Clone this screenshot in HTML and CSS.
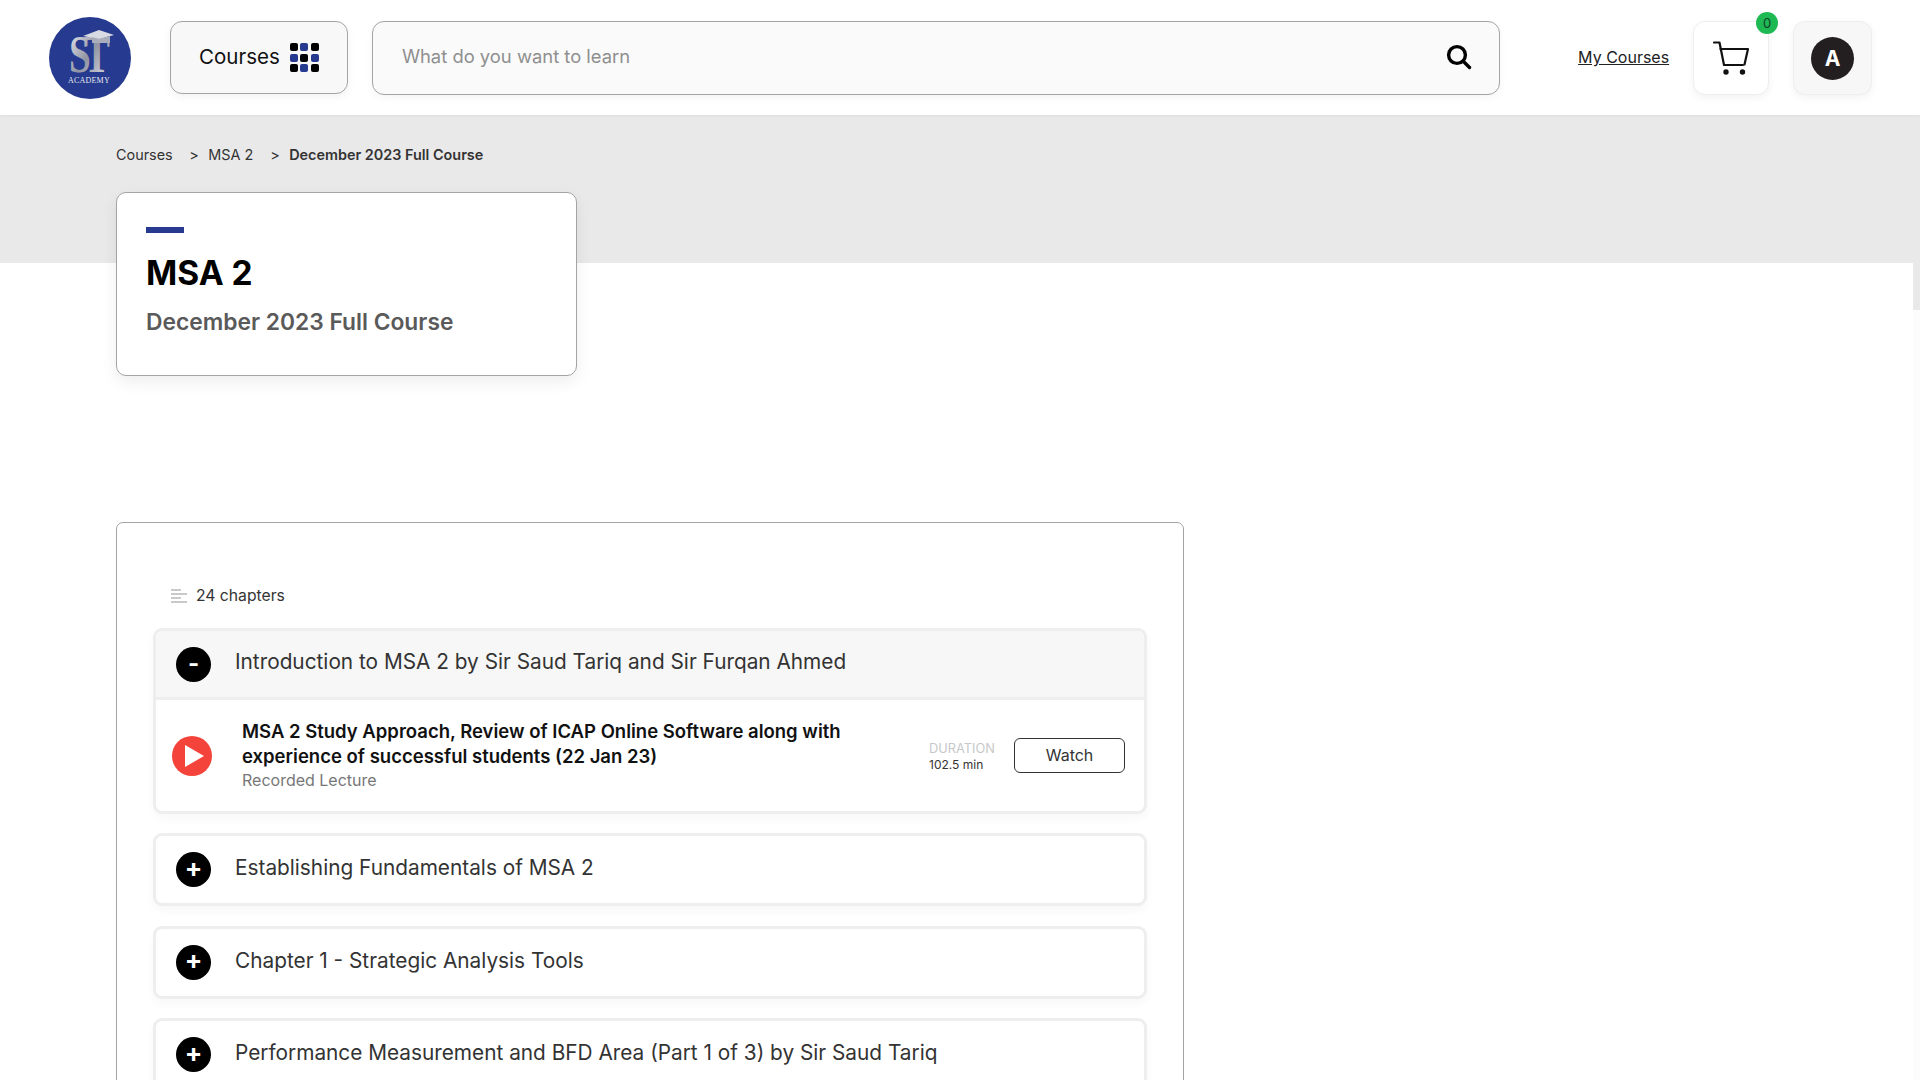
FILE: index.html
```html
<!DOCTYPE html>
<html lang="en">
<head>
<meta charset="utf-8">
<title>December 2023 Full Course</title>
<link rel="stylesheet" href="styles.css">
</head>
<body>
<header class="topbar">
  <svg class="logo" viewBox="0 0 82 82" aria-label="ST Academy">
    <defs>
      <linearGradient id="silver" x1="0" y1="0" x2="1" y2="1">
        <stop offset="0" stop-color="#f4f4f7"/>
        <stop offset="0.5" stop-color="#8f93a2"/>
        <stop offset="1" stop-color="#e8e9ee"/>
      </linearGradient>
    </defs>
    <circle cx="41" cy="41" r="41" fill="#263a8f"/>
    <text transform="translate(37 55) scale(.85 1.15)" class="logo-st" fill="url(#silver)">ST</text>
    <path d="M34 19 L50 13 L65 18 L50 22 Z" fill="#d9dbe3"/>
    <path d="M43 20 V26 H61 V19 L50 22 Z" fill="#a9adbb"/>
    <text x="40" y="66" class="logo-academy">ACADEMY</text>
  </svg>
  <button class="courses-btn">
    <span class="courses-label">Courses</span>
    <span class="dots">
      <i class="k"></i><i class="b"></i><i class="k"></i>
      <i class="b"></i><i class="k"></i><i class="b"></i>
      <i class="k"></i><i class="b"></i><i class="k"></i>
    </span>
  </button>
  <div class="search">
    <span class="placeholder">What do you want to learn</span>
    <svg class="search-icon" viewBox="0 0 26 26" fill="none" stroke="#000" stroke-width="3.4" stroke-linecap="round">
      <circle cx="11" cy="11" r="8.4"/>
      <path d="M17.5 17.5 L23.5 23.5"/>
    </svg>
  </div>
  <a class="my-courses" href="#">My Courses</a>
  <div class="cart">
    <svg class="cart-icon" viewBox="0 0 36 34" fill="none" stroke="#111" stroke-width="2.2" stroke-linejoin="round" stroke-linecap="round">
      <path d="M1 1.5 H6.5 L11 24 H30"/>
      <path d="M7.5 8 H35 L31.5 23.5"/>
      <circle cx="13" cy="31" r="1.6" fill="#111"/>
      <circle cx="29.5" cy="31" r="1.6" fill="#111"/>
    </svg>
    <span class="badge">0</span>
  </div>
  <div class="avatar-box"><span class="avatar">A</span></div>
</header>

<section class="hero">
  <nav class="crumbs">
    <span>Courses</span><span class="sep">&gt;</span><span>MSA 2</span><span class="sep sep2">&gt;</span><span class="current">December 2023 Full Course</span>
  </nav>
  <div class="title-card">
    <div class="accent"></div>
    <h1>MSA 2</h1>
    <h2>December 2023 Full Course</h2>
  </div>
</section>

<main class="content">
  <section class="panel">
    <div class="count">
      <svg class="count-icon" viewBox="0 0 16 14" fill="#c9c9c9">
        <rect x="0" y="0" width="10" height="2"/>
        <rect x="0" y="4" width="16" height="2"/>
        <rect x="0" y="8" width="10" height="2"/>
        <rect x="0" y="12" width="16" height="2"/>
      </svg>
      <span>24 chapters</span>
    </div>

    <article class="chapter open">
      <div class="chapter-head">
        <span class="toggle">-</span>
        <span class="chapter-title">Introduction to MSA 2 by Sir Saud Tariq and Sir Furqan Ahmed</span>
      </div>
      <div class="lecture">
        <svg class="play" viewBox="0 0 40 40">
          <circle cx="20" cy="20" r="20" fill="#f4433a"/>
          <path d="M13 9 L32 20 L13 31 Z" fill="#fff"/>
        </svg>
        <div class="lecture-info">
          <div class="lecture-title">MSA 2 Study Approach, Review of ICAP Online Software along with experience of successful students (22 Jan 23)</div>
          <div class="lecture-type">Recorded Lecture</div>
        </div>
        <div class="duration">
          <div class="duration-label">DURATION</div>
          <div class="duration-value">102.5 min</div>
        </div>
        <button class="watch">Watch</button>
      </div>
    </article>

    <article class="chapter">
      <div class="chapter-head"><span class="toggle plus">+</span><span class="chapter-title">Establishing Fundamentals of MSA 2</span></div>
    </article>
    <article class="chapter">
      <div class="chapter-head"><span class="toggle plus">+</span><span class="chapter-title">Chapter 1 - Strategic Analysis Tools</span></div>
    </article>
    <article class="chapter">
      <div class="chapter-head"><span class="toggle plus">+</span><span class="chapter-title">Performance Measurement and BFD Area (Part 1 of 3) by Sir Saud Tariq</span></div>
    </article>
  </section>
</main>
<div class="scroll-track"></div>
<div class="scroll-thumb"></div>
</body>
</html>
```

FILE: styles.css
```css
* { box-sizing: border-box; }
html, body { margin: 0; padding: 0; height: 1080px; overflow: hidden; background: #fff; }
body { font-family: "Inter", "Liberation Sans", sans-serif; color: #222; position: relative; }

.topbar {
  height: 115px;
  display: flex;
  align-items: flex-start;
  padding: 21px 48px 0 49px;
  background: #fff;
  position: relative;
  z-index: 2;
  box-shadow: 0 1px 3px rgba(0,0,0,.05);
}
.logo { width: 82px; height: 82px; margin-top: -4px; flex: none; }
.logo-st { font: 700 46px "Liberation Serif", serif; text-anchor: middle; letter-spacing: -8px; }
.logo-academy { font: 400 8px "Liberation Serif", serif; text-anchor: middle; fill: #e4e6f0; letter-spacing: 0.2px; }

.courses-btn {
  margin-left: 39px;
  width: 178px;
  height: 73px;
  border: 1px solid #a4a4a4;
  border-radius: 12px;
  background: #f8f8f8;
  display: flex;
  align-items: center;
  justify-content: center;
  gap: 10px;
  font: 400 20.5px "Inter", sans-serif;
  color: #111;
  padding: 0;
  box-shadow: 0 3px 8px rgba(0,0,0,.05);
}
.courses-label { margin-top: -3px; }
.dots { display: grid; grid-template-columns: repeat(3, 8px); grid-auto-rows: 8px; gap: 2.5px; }
.dots i { display: block; border-radius: 2px; }
.dots .k { background: #000; }
.dots .b { background: #263a8f; }

.search {
  margin-left: 24px;
  width: 1129px;
  height: 74px;
  border: 1px solid #a4a4a4;
  border-radius: 12px;
  background: #fafafa;
  display: flex;
  align-items: center;
  justify-content: space-between;
  padding: 0 27px 0 29px;
  box-shadow: 0 3px 8px rgba(0,0,0,.04);
}
.placeholder { font-size: 18.4px; color: #8f8f8f; margin-top: -4px; }
.search-icon { width: 26px; height: 26px; margin-top: -2px; }

.my-courses {
  margin: 26px 0 0 78px;
  font-size: 16px;
  color: #222;
  text-decoration: underline;
  width: 91px;
  white-space: nowrap;
}
.cart {
  margin-left: 24px;
  width: 76px;
  height: 74px;
  border: 1px solid #eee;
  border-radius: 12px;
  background: #fff;
  display: flex;
  align-items: center;
  justify-content: center;
  position: relative;
  box-shadow: 0 3px 8px rgba(0,0,0,.05);
}
.cart-icon { width: 36px; height: 34px; }
.badge {
  position: absolute;
  top: -10px;
  right: -10px;
  width: 22px;
  height: 22px;
  border-radius: 50%;
  background: #1fb954;
  color: #12402a;
  font-size: 13px;
  display: flex;
  align-items: center;
  justify-content: center;
}
.avatar-box {
  margin-left: 24px;
  width: 79px;
  height: 74px;
  border: 1px solid #eee;
  border-radius: 12px;
  background: #f7f7f7;
  display: flex;
  align-items: center;
  justify-content: center;
  box-shadow: 0 3px 8px rgba(0,0,0,.05);
}
.avatar {
  width: 43px;
  height: 43px;
  border-radius: 50%;
  background: #231f20;
  color: #fff;
  font-size: 21px;
  font-weight: 700;
  display: flex;
  align-items: center;
  justify-content: center;
}

.hero {
  height: 148px;
  background: #e9e9e9;
  padding: 31px 0 0 116px;
}
.crumbs { font-size: 14.4px; color: #333; display: flex; height: 18px; line-height: 18px; }
.sep { margin: 0 9.5px 0 16.5px; }
.sep2 { margin-left: 17px; }
.current { font-weight: 600; }
.title-card {
  margin-top: 28px;
  width: 461px;
  height: 184px;
  background: #fff;
  border: 1px solid #a4a4a4;
  border-radius: 10px;
  padding: 34px 29px 0;
  position: relative;
  box-shadow: 0 6px 16px rgba(0,0,0,.07);
}
.accent { width: 38px; height: 6px; background: #263a8f; }
.title-card h1 { margin: 18px 0 0; font-size: 33.5px; line-height: 44px; font-weight: 700; color: #000; }
.title-card h2 { margin: 12px 0 0; font-size: 22.8px; line-height: 30px; font-weight: 600; color: #5a5a5a; }

.content { padding: 259px 0 0 116px; }
.panel {
  width: 1068px;
  height: 700px;
  border: 1px solid #a4a4a4;
  border-radius: 7px 7px 0 0;
  padding: 59px 36px 0;
}
.count { display: flex; align-items: center; gap: 9px; padding-left: 18px; height: 27px; font-size: 15.7px; color: #333; margin-bottom: 19px; }
.count-icon { width: 16px; height: 14px; }

.chapter {
  border: 3px solid #eee;
  border-radius: 9px;
  background: #fff;
  margin-bottom: 19.5px;
  overflow: hidden;
  box-shadow: 0 5px 10px rgba(0,0,0,.03);
}
.chapter-head {
  height: 67px;
  display: flex;
  align-items: center;
  padding-left: 20px;
  gap: 24px;
}
.open { margin-bottom: 19px; }
.open .chapter-head { background: #f7f7f7; height: 69px; border-bottom: 3px solid #eee; }
.toggle {
  width: 35px;
  height: 35px;
  border-radius: 50%;
  background: #000;
  color: #fff;
  font-size: 24px;
  font-weight: 700;
  line-height: 1;
  display: flex;
  align-items: center;
  justify-content: center;
  flex: none;
}
.plus { font-size: 26px; padding-bottom: 4px; }
.chapter-title { font-size: 20.8px; color: #333; margin-top: -4px; }
.open .chapter-title { margin-top: -5px; }

.lecture {
  height: 111px;
  display: flex;
  align-items: center;
  padding-left: 16px;
}
.play { width: 40px; height: 40px; flex: none; }
.lecture-info { width: 617px; margin-left: 30px; }
.lecture-title { font-size: 18.5px; line-height: 25px; font-weight: 600; color: #111; }
.lecture-type { font-size: 16px; line-height: 23px; color: #777; }
.duration { margin: 2px 0 0 70px; width: 85px; }
.duration-label { font-size: 12.8px; line-height: 16px; color: #c8c8c8; }
.duration-value { font-size: 12px; line-height: 16px; color: #333; }
.watch {
  width: 111px;
  height: 35px;
  background: #fff;
  border: 1px solid #333;
  border-radius: 6px;
  font: 400 16px "Inter", sans-serif;
  color: #333;
  padding: 0 0 2px;
}
.scroll-track {
  position: absolute;
  top: 310px;
  right: 0;
  bottom: 0;
  width: 7px;
  background: #fcfcfc;
}
.scroll-thumb {
  position: absolute;
  top: 263px;
  right: 0;
  width: 7px;
  height: 47px;
  background: #e9e9e9;
}
```
